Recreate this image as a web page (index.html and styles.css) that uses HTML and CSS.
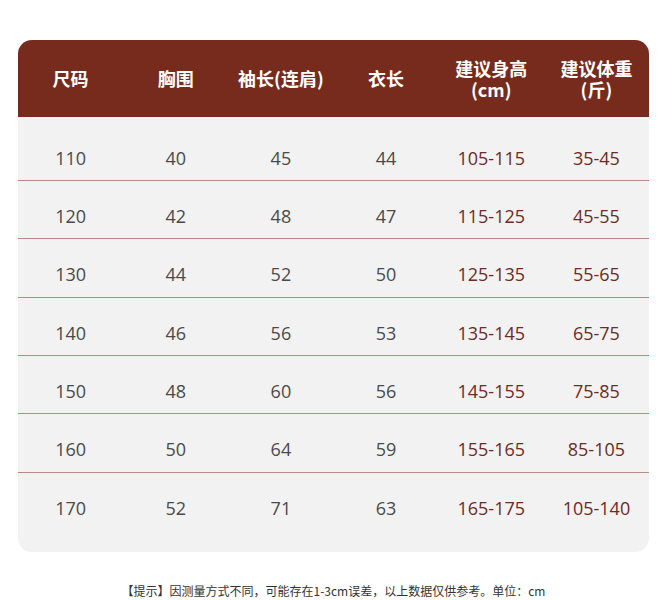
FILE: index.html
```html
<!DOCTYPE html>
<html lang="zh-CN">
<head>
<meta charset="utf-8">
<link rel="stylesheet" href="styles.css">
</head>
<body>
<div class="page">
  <div class="table">
    <div class="head">
      <div class="hc">尺码</div>
      <div class="hc">胸围</div>
      <div class="hc">袖长(连肩)</div>
      <div class="hc">衣长</div>
      <div class="hc">建议身高<br>(cm)</div>
      <div class="hc">建议体重<br>(斤)</div>
    </div>
    <div class="body">
      <div class="row"><div class="c">110</div><div class="c">40</div><div class="c">45</div><div class="c">44</div><div class="c r">105-115</div><div class="c r">35-45</div></div>
      <div class="row"><div class="c">120</div><div class="c">42</div><div class="c">48</div><div class="c">47</div><div class="c r">115-125</div><div class="c r">45-55</div></div>
      <div class="row"><div class="c">130</div><div class="c">44</div><div class="c">52</div><div class="c">50</div><div class="c r">125-135</div><div class="c r">55-65</div></div>
      <div class="row"><div class="c">140</div><div class="c">46</div><div class="c">56</div><div class="c">53</div><div class="c r">135-145</div><div class="c r">65-75</div></div>
      <div class="row"><div class="c">150</div><div class="c">48</div><div class="c">60</div><div class="c">56</div><div class="c r">145-155</div><div class="c r">75-85</div></div>
      <div class="row"><div class="c">160</div><div class="c">50</div><div class="c">64</div><div class="c">59</div><div class="c r">155-165</div><div class="c r">85-105</div></div>
      <div class="row last"><div class="c">170</div><div class="c">52</div><div class="c">71</div><div class="c">63</div><div class="c r">165-175</div><div class="c r">105-140</div></div>
    </div>
  </div>
  <p class="note">【提示】因测量方式不同，可能存在1-3cm误差，以上数据仅供参考。单位：cm</p>
</div>
</body>
</html>
```
FILE: styles.css
```css
html, body {
  margin: 0;
  padding: 0;
  background: #ffffff;
}
.page {
  width: 667px;
  padding-top: 40px;
  box-sizing: border-box;
}
.table {
  margin: 0 18px;
  width: 631px;
  background: #f2f2f2;
  border-radius: 14px;
  overflow: hidden;
}
.head {
  display: grid;
  grid-template-columns: repeat(6, 1fr);
  height: 77px;
  background: #772b1d;
  align-items: center;
}
.hc {
  text-align: center;
  color: #ffffff;
  font-family: "Noto Sans CJK SC", "Noto Sans", sans-serif;
  font-weight: 700;
  font-size: 18px;
  line-height: 21px;
}
.body {
  padding: 6px 0 21px;
}
.row {
  display: grid;
  grid-template-columns: repeat(6, 1fr);
  height: 58px;
  box-sizing: border-box;
  border-bottom: 1px solid #b98a84;
}
.row:nth-child(3),
.row:nth-child(6) {
  height: 59px;
}
.row.last {
  border-bottom: none;
  height: 58px;
}
.c {
  text-align: center;
  font-family: "Open Sans", "Noto Sans", sans-serif;
  font-weight: 500;
  font-size: 18px;
  line-height: 24px;
  padding-top: 23px;
  color: #4a4a4a;
}
.c.r {
  color: #6e2a25;
}
.note {
  margin: 32px 0 0;
  text-align: center;
  font-family: "Noto Sans CJK SC", "Noto Sans", sans-serif;
  font-size: 12px;
  line-height: 14px;
  color: #333333;
}
```
